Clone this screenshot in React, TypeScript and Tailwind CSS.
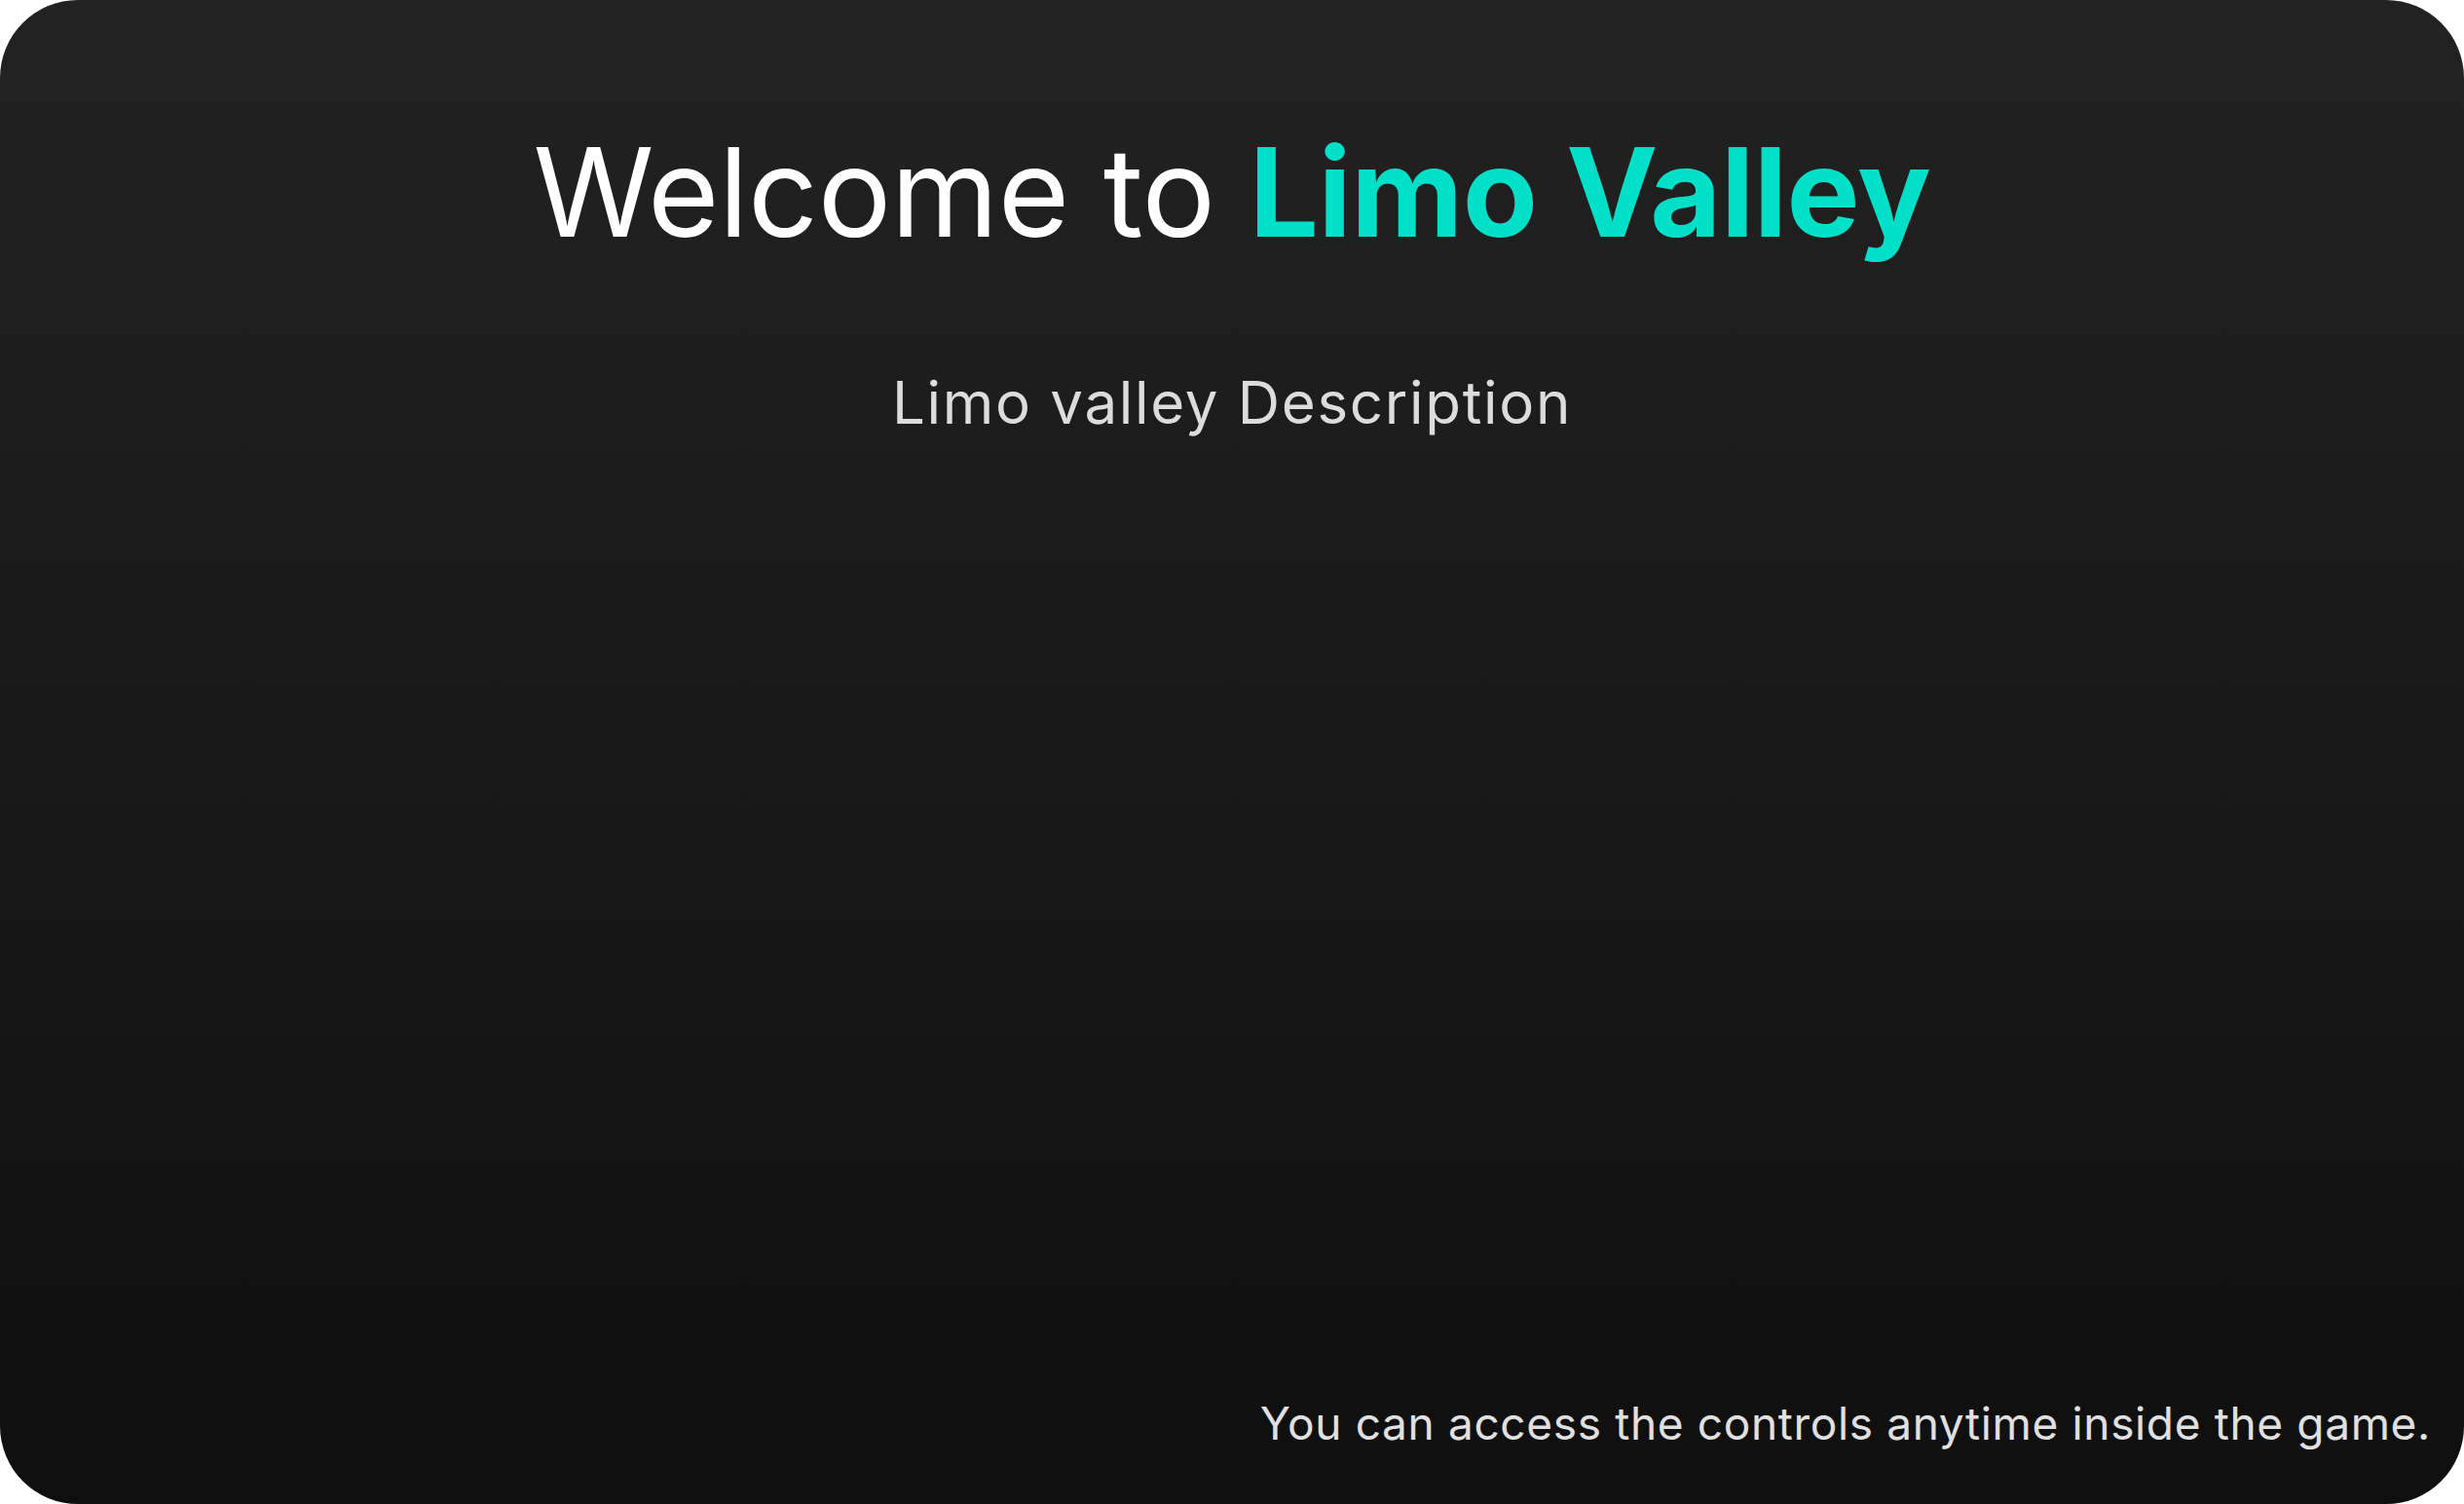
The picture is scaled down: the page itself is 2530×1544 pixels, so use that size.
export default function App() {
  return (
    <div className="w-[2530px] h-[1544px] bg-white">
      <div
        className="flex flex-col w-full h-full rounded-[80px] bg-gradient-to-b from-[#222222] to-[#0f0f0f] text-white"
        style={{ fontFamily: "Inter, 'Noto Sans', sans-serif" }}
      >
        <h1 className="mt-[122px] text-center text-[126px] leading-[1.2] font-normal tracking-[-0.4px]">
          Welcome to <span className="font-bold text-[#00e0c8]">Limo Valley</span>
        </h1>
        <p className="mt-[104px] text-center text-[60px] leading-[1.2] tracking-[1.7px] text-[#dcdcdc]">
          Limo valley Description
        </p>
        <p className="mt-auto mb-[55px] mr-[34px] text-right text-[46px] leading-[1.2] tracking-[0.65px] text-[#e0e0e0]">
          You can access the controls anytime inside the game.
        </p>
      </div>
    </div>
  );
}
